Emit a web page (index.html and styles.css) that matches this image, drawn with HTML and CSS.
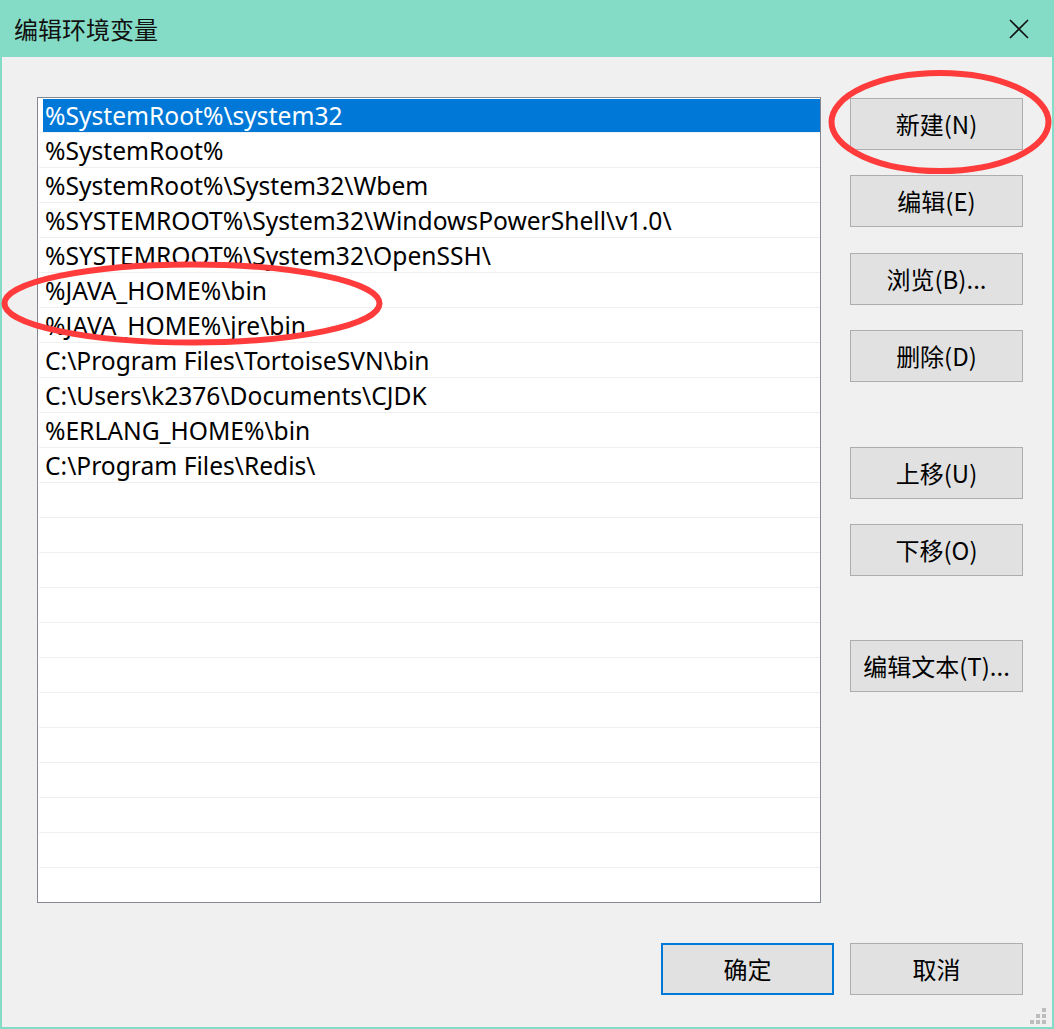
FILE: index.html
```html
<!DOCTYPE html>
<html lang="zh-CN">
<head>
<meta charset="utf-8">
<title>编辑环境变量</title>
<link rel="stylesheet" href="styles.css">
</head>
<body>
<div class="window">
  <div class="titlebar">
    <span class="title">编辑环境变量</span>
    <svg class="close" width="20" height="20" viewBox="0 0 20 20"><path d="M1 1 L19 19 M19 1 L1 19" stroke="#111" stroke-width="1.6" fill="none"/></svg>
  </div>
  <div class="client">
    <div class="main">
      <div class="listbox">
        <div class="row selected"><span class="cell">%SystemRoot%\system32</span></div>
        <div class="row"><span class="cell">%SystemRoot%</span></div>
        <div class="row"><span class="cell">%SystemRoot%\System32\Wbem</span></div>
        <div class="row"><span class="cell">%SYSTEMROOT%\System32\WindowsPowerShell\v1.0\</span></div>
        <div class="row"><span class="cell">%SYSTEMROOT%\System32\OpenSSH\</span></div>
        <div class="row"><span class="cell">%JAVA_HOME%\bin</span></div>
        <div class="row"><span class="cell">%JAVA_HOME%\jre\bin</span></div>
        <div class="row"><span class="cell">C:\Program Files\TortoiseSVN\bin</span></div>
        <div class="row"><span class="cell">C:\Users\k2376\Documents\CJDK</span></div>
        <div class="row"><span class="cell">%ERLANG_HOME%\bin</span></div>
        <div class="row"><span class="cell">C:\Program Files\Redis\</span></div>
        <div class="row"></div><div class="row"></div><div class="row"></div><div class="row"></div>
        <div class="row"></div><div class="row"></div><div class="row"></div><div class="row"></div>
        <div class="row"></div><div class="row"></div><div class="row"></div><div class="row last"></div>
      </div>
      <div class="side">
        <button class="btn">新建(N)</button>
        <button class="btn">编辑(E)</button>
        <button class="btn b3">浏览(B)...</button>
        <button class="btn">删除(D)</button>
        <button class="btn far">上移(U)</button>
        <button class="btn">下移(O)</button>
        <button class="btn far2">编辑文本(T)...</button>
      </div>
    </div>
    <div class="footer">
      <button class="btn default">确定</button>
      <button class="btn">取消</button>
    </div>
    <div class="grip">
      <i style="grid-area:1/3"></i>
      <i style="grid-area:2/2"></i><i style="grid-area:2/3"></i>
      <i style="grid-area:3/1"></i><i style="grid-area:3/2"></i><i style="grid-area:3/3"></i>
    </div>
  </div>
  <svg class="marks" width="1054" height="1029" viewBox="0 0 1054 1029">
    <ellipse cx="940" cy="122" rx="108.5" ry="49" fill="none" stroke="#FF3B3B" stroke-width="6"/>
    <ellipse cx="192" cy="303.5" rx="187.5" ry="39" fill="none" stroke="#FF3B3B" stroke-width="6"/>
  </svg>
</div>
</body>
</html>
```
FILE: styles.css
```css
* { box-sizing: border-box; }
html, body { margin: 0; padding: 0; }
body {
  width: 1054px;
  height: 1029px;
  overflow: hidden;
  background: #84DCC6;
  font-family: "Noto Sans", "Noto Sans CJK SC", sans-serif;
  color: #000;
}
.window {
  position: relative;
  width: 1054px;
  height: 1029px;
  display: flex;
  flex-direction: column;
}
.titlebar {
  height: 57px;
  flex: none;
  display: flex;
  align-items: center;
  justify-content: space-between;
  padding: 0 25px 0 14px;
  background: #84DCC6;
}
.title {
  font-family: "Noto Sans CJK SC", sans-serif;
  font-size: 24px;
  color: #111;
  margin-top: 0;
}
.close { display: block; margin-top: 1px; }
.client {
  position: relative;
  flex: 1;
  margin: 0 2px 2px 2px;
  background: #F0F0F0;
  padding: 40px 29px 0 35px;
}
.main {
  display: flex;
  gap: 29px;
  align-items: flex-start;
}
.listbox {
  width: 784px;
  height: 806px;
  border: 1px solid #828790;
  background: #fff;
  overflow: hidden;
  padding: 0 0 0 1px;
}
.row {
  height: 35px;
  border-bottom: 1px solid #EFEFEF;
  display: flex;
}
.cell {
  font-size: 24.6px;
  line-height: 33px;
  padding: 0 0 0 2px;
  margin: 1px 0 0 4px;
  white-space: nowrap;
  flex: 1;
}
.row.selected .cell {
  background: #0078D7;
  color: #fff;
}
.side {
  display: flex;
  flex-direction: column;
  gap: 25px;
  padding-top: 1px;
}
.btn {
  width: 173px;
  height: 52px;
  border: 1px solid #ADADAD;
  background: #E1E1E1;
  font-family: "Noto Sans CJK SC", sans-serif;
  font-size: 24px;
  color: #000;
  padding: 0;
  margin: 0;
  line-height: 1;
}
.side .b3 { margin-top: 1px; }
.side .far { margin-top: 40px; }
.side .far2 { margin-top: 39px; }
.footer {
  display: flex;
  justify-content: flex-end;
  gap: 16px;
  margin-top: 40px;
}
.btn.default {
  border: 2px solid #0078D7;
}
.grip {
  position: absolute;
  right: 6px;
  bottom: 3px;
  display: grid;
  grid-template-columns: repeat(3, 4px);
  grid-template-rows: repeat(3, 4px);
  gap: 2px;
}
.grip i {
  display: block;
  background: #BDBDBD;
}
.marks {
  position: absolute;
  left: 0;
  top: 0;
  pointer-events: none;
}
```
